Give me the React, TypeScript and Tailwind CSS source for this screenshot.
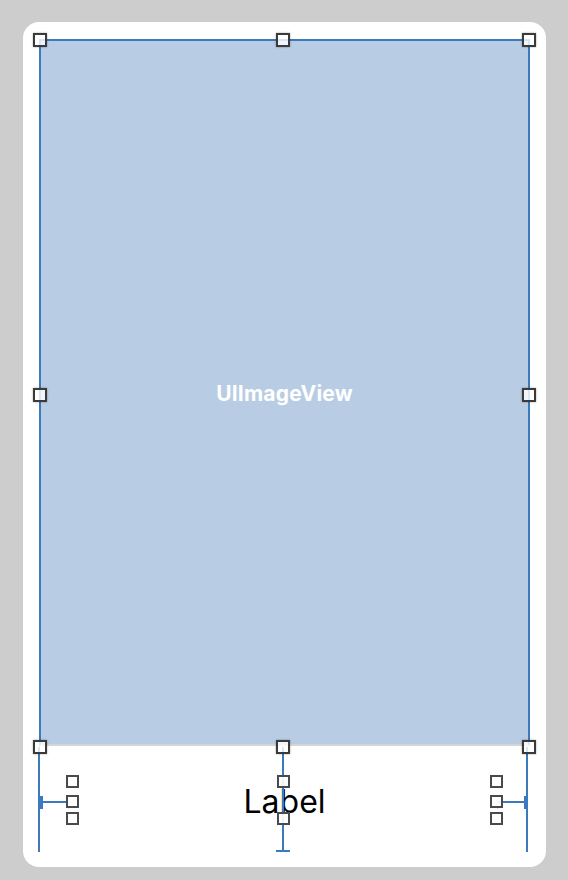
import * as React from "react";

const BLUE = "bg-[#3b7bbd]";

function Handle({ x, y, small }: { x: number; y: number; small?: boolean }) {
  const size = small ? 13 : 14;
  return (
    <div
      className={
        small
          ? "absolute border-[2px] border-[#4a4a4a] bg-white/90"
          : "absolute border-[2px] border-[#3a3a3a] bg-white/80 shadow-[0_0_2px_rgba(0,0,0,0.35)]"
      }
      style={{ left: x - size / 2, top: y - size / 2, width: size, height: size }}
    />
  );
}

function Line({ x, y, w, h, faint }: { x: number; y: number; w: number; h: number; faint?: boolean }) {
  return (
    <div
      className={`absolute ${faint ? "bg-[#c9dcf0]" : BLUE}`}
      style={{ left: x, top: y, width: w, height: h }}
    />
  );
}

export default function App() {
  return (
    <div className="relative w-[568px] h-[880px] bg-[#cdcdcd] pt-[22px] pl-[23px] font-['Inter',sans-serif]">
      {/* Scene card */}
      <div className="flex flex-col w-[523px] h-[845px] bg-white rounded-[16px] pt-[17px] px-[16px]">
        <div className="flex items-center justify-center h-[707px] bg-[#b8cce4] border-t-[2px] border-x-[2px] border-[#3b7bbd] border-b-[2px] border-b-[#d4d4d4]">
          <span className="text-white text-[21px] font-bold tracking-[0.2px] mt-[3px]">
            UIImageView
          </span>
        </div>
        <div className="flex justify-center pt-[40px]">
          <span className="text-black text-[32px] leading-none">
            Label
          </span>
        </div>
      </div>

      {/* Constraint overlay */}
      <div className="absolute inset-0 pointer-events-none">
        {/* side guides */}
        <Line x={38} y={747} w={2} h={105} />
        <Line x={526} y={747} w={2} h={105} />
        {/* center vertical */}
        <Line x={282} y={747} w={2} h={104} />
        <Line x={276} y={850} w={14} h={2} />
        {/* left horizontal */}
        <Line x={40} y={801} w={29} h={2} />
        <Line x={40} y={796} w={3} h={13} />
        <Line x={68} y={796} w={1} h={13} faint />
        {/* right horizontal */}
        <Line x={498} y={801} w={28} h={2} />
        <Line x={524} y={796} w={3} h={13} />
        <Line x={497} y={796} w={1} h={13} faint />
        {/* faint label guides */}
        <Line x={277} y={779} w={12} h={1} faint />
        <Line x={277} y={816} w={12} h={1} faint />

        {/* image view handles */}
        <Handle x={39.5} y={39.5} />
        <Handle x={283} y={39.5} />
        <Handle x={528.5} y={39.5} />
        <Handle x={39.5} y={394.5} />
        <Handle x={528.5} y={394.5} />
        <Handle x={39.5} y={747} />
        <Handle x={283} y={747} />
        <Handle x={528.5} y={747} />

        {/* label handles */}
        <Handle x={72.5} y={781.5} small />
        <Handle x={72.5} y={801} small />
        <Handle x={72.5} y={818.5} small />
        <Handle x={283} y={781.5} small />
        <Handle x={283} y={818.5} small />
        <Handle x={496.5} y={781.5} small />
        <Handle x={496.5} y={801} small />
        <Handle x={496.5} y={818.5} small />
      </div>
    </div>
  );
}
